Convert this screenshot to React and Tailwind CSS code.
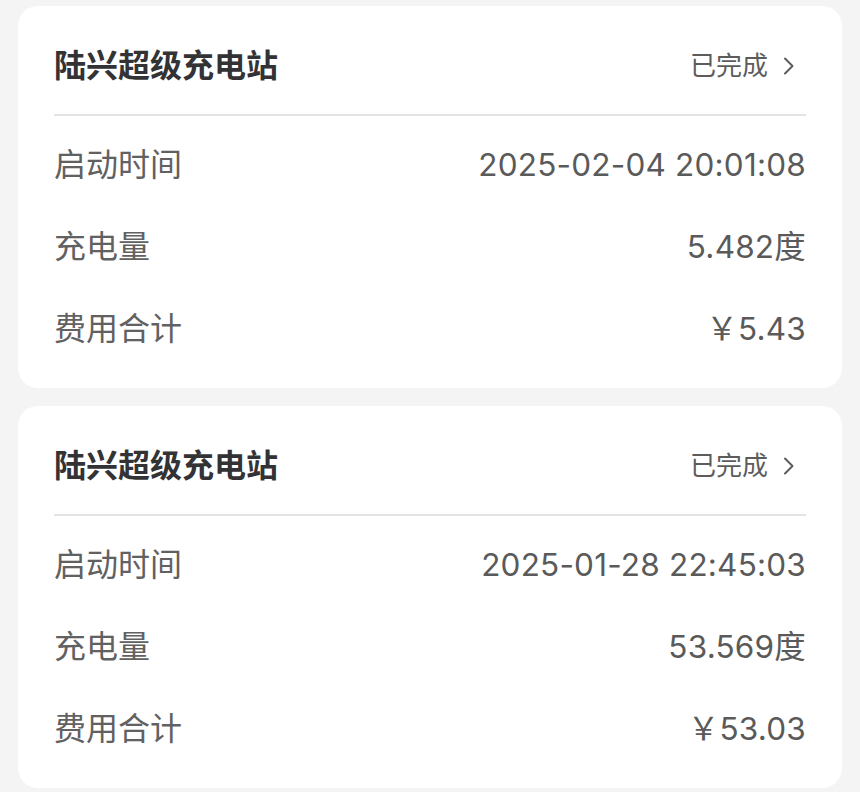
import React from 'react';

const records = [
  { station: '陆兴超级充电站', status: '已完成', start: '2025-02-04 20:01:08', energy: '5.482度', cost: '￥5.43' },
  { station: '陆兴超级充电站', status: '已完成', start: '2025-01-28 22:45:03', energy: '53.569度', cost: '￥53.03' },
];

const font = { fontFamily: '"Inter", "Noto Sans CJK SC", sans-serif' };

const ChevronRight = () => (
  <svg width="16" height="24" viewBox="0 0 16 24" fill="none" className="ml-[13px] mr-[9px]">
    <path d="M4 4.5 L11.5 12 L4 19.5" stroke="#5c5c5c" strokeWidth="2" strokeLinecap="round" strokeLinejoin="round" />
  </svg>
);

const Row = ({ label, value }) => (
  <div className="flex h-[82px] items-center justify-between">
    <span className="text-[32px] leading-none text-[#616161]">{label}</span>
    <span className="text-[31.5px] leading-none tracking-[0.2px] text-[#5a5a5a]">{value}</span>
  </div>
);

const RecordCard = ({ record }) => (
  <div className="h-[382px] rounded-[20px] bg-white px-[36px]">
    {/* header */}
    <div className="flex h-[110px] items-center justify-between border-b-2 border-[#e4e4e4] pt-[12px]">
      <span className="text-[32px] font-bold leading-none text-[#333336]">{record.station}</span>
      <span className="flex items-center text-[26px] leading-none text-[#5c5c5c]">
        {record.status}
        <ChevronRight />
      </span>
    </div>
    <div className="pt-[8px]">
      <Row label="启动时间" value={record.start} />
      <Row label="充电量" value={record.energy} />
      <Row label="费用合计" value={record.cost} />
    </div>
  </div>
);

export default function App() {
  return (
    <div className="min-h-[792px] w-[860px] bg-[#f4f4f4] px-[18px] pt-[6px]" style={font}>
      <div className="flex flex-col gap-[18px]">
        {records.map((r, i) => (
          <RecordCard key={i} record={r} />
        ))}
      </div>
    </div>
  );
}
